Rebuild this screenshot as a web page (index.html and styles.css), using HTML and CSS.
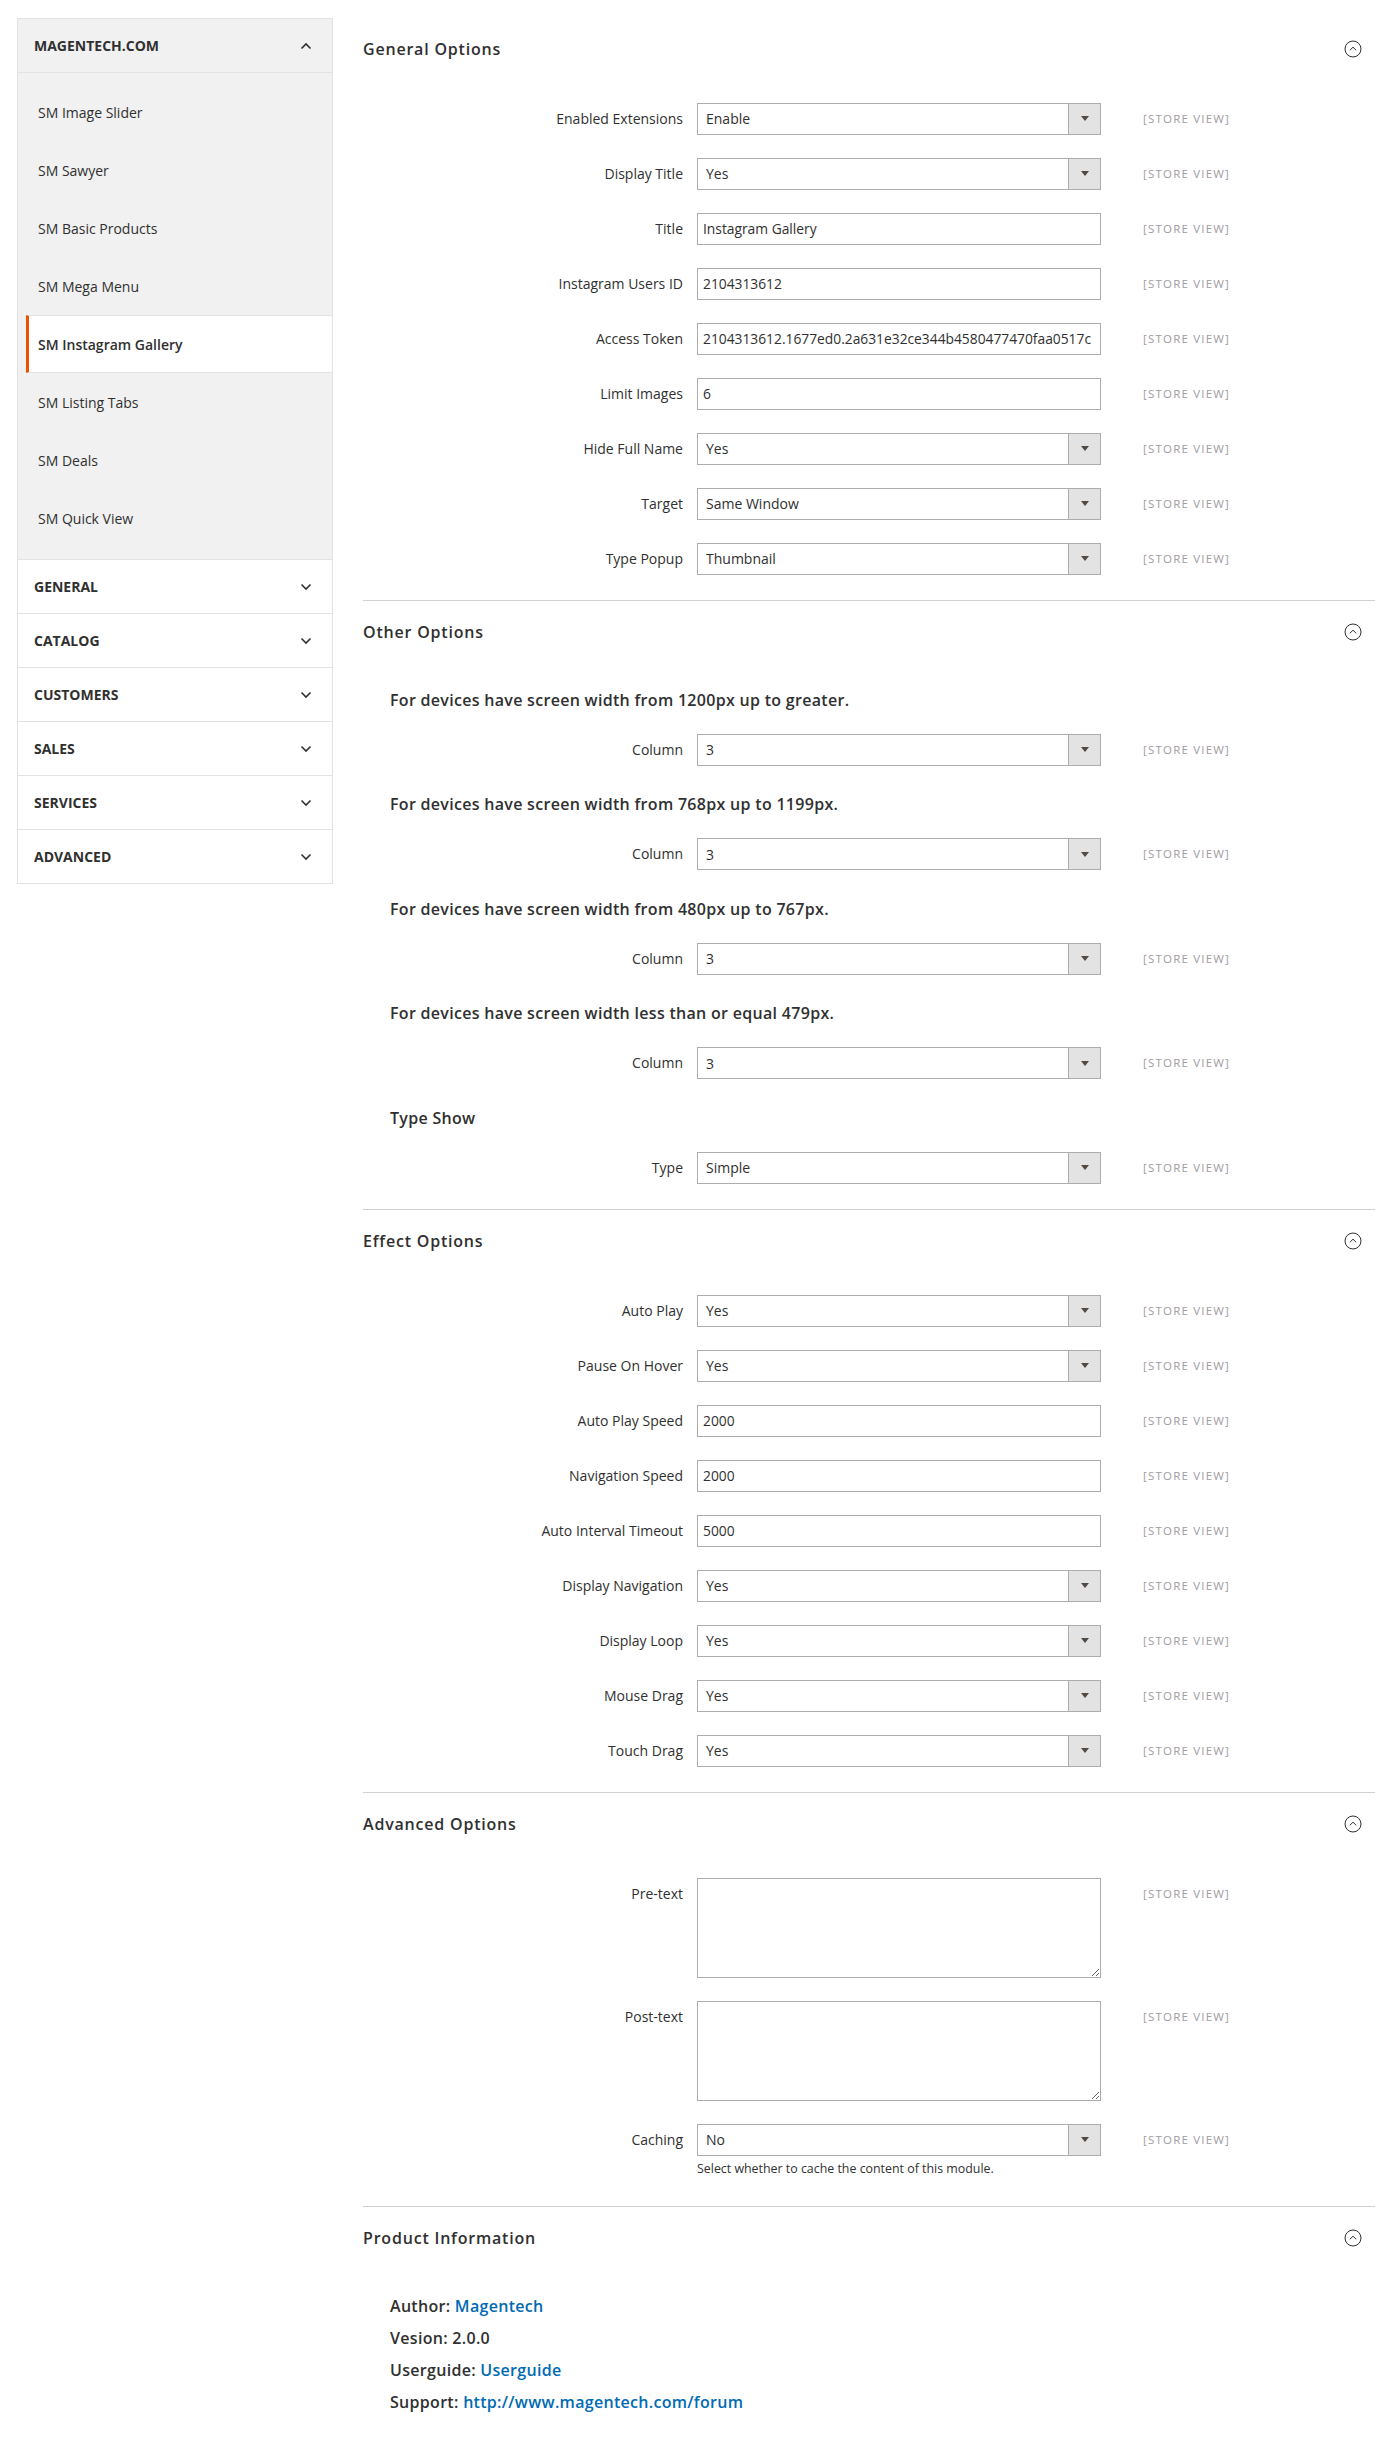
FILE: index.html
```
<html>
<head>
  <meta charset="UTF-8">
  <meta name="viewport" content="width=device-width, initial-scale=1.0">
  <title>Configuration - SM Instagram Gallery</title>
  <link rel="stylesheet" href="styles.css">
</head>
<body>
  <div class="page">
    <aside class="sidebar">
      <div class="tab-group open">
        <div class="tab-title">
          MAGENTECH.COM
          <svg class="chev" width="12" height="8" viewBox="0 0 12 8"><path d="M1.5 6.5 L6 2 L10.5 6.5"/></svg>
        </div>
        <ul class="tab-items">
          <li>SM Image Slider</li>
          <li>SM Sawyer</li>
          <li>SM Basic Products</li>
          <li>SM Mega Menu</li>
          <li class="active">SM Instagram Gallery</li>
          <li>SM Listing Tabs</li>
          <li>SM Deals</li>
          <li>SM Quick View</li>
        </ul>
      </div>
      <div class="tab-group">
        <div class="tab-title">GENERAL <svg class="chev" width="12" height="8" viewBox="0 0 12 8"><path d="M1.5 1.5 L6 6 L10.5 1.5"/></svg></div>
      </div>
      <div class="tab-group">
        <div class="tab-title">CATALOG <svg class="chev" width="12" height="8" viewBox="0 0 12 8"><path d="M1.5 1.5 L6 6 L10.5 1.5"/></svg></div>
      </div>
      <div class="tab-group">
        <div class="tab-title">CUSTOMERS <svg class="chev" width="12" height="8" viewBox="0 0 12 8"><path d="M1.5 1.5 L6 6 L10.5 1.5"/></svg></div>
      </div>
      <div class="tab-group">
        <div class="tab-title">SALES <svg class="chev" width="12" height="8" viewBox="0 0 12 8"><path d="M1.5 1.5 L6 6 L10.5 1.5"/></svg></div>
      </div>
      <div class="tab-group">
        <div class="tab-title">SERVICES <svg class="chev" width="12" height="8" viewBox="0 0 12 8"><path d="M1.5 1.5 L6 6 L10.5 1.5"/></svg></div>
      </div>
      <div class="tab-group">
        <div class="tab-title">ADVANCED <svg class="chev" width="12" height="8" viewBox="0 0 12 8"><path d="M1.5 1.5 L6 6 L10.5 1.5"/></svg></div>
      </div>
    </aside>

    <main class="main">
      <!-- General Options -->
      <section class="section">
        <div class="section-title">
          General Options
          <svg class="toggle" width="18" height="18" viewBox="0 0 18 18"><circle cx="9" cy="9" r="8"/><path d="M5.8 10.3 L9 7.2 L12.2 10.3"/></svg>
        </div>
        <div class="field">
          <label>Enabled Extensions</label>
          <div class="select"><select><option>Enable</option></select><span class="arrow"></span></div>
          <span class="scope">[STORE VIEW]</span>
        </div>
        <div class="field">
          <label>Display Title</label>
          <div class="select"><select><option>Yes</option></select><span class="arrow"></span></div>
          <span class="scope">[STORE VIEW]</span>
        </div>
        <div class="field">
          <label>Title</label>
          <input class="text" type="text" value="Instagram Gallery">
          <span class="scope">[STORE VIEW]</span>
        </div>
        <div class="field">
          <label>Instagram Users ID</label>
          <input class="text" type="text" value="2104313612">
          <span class="scope">[STORE VIEW]</span>
        </div>
        <div class="field">
          <label>Access Token</label>
          <input class="text" type="text" value="2104313612.1677ed0.2a631e32ce344b4580477470faa0517c">
          <span class="scope">[STORE VIEW]</span>
        </div>
        <div class="field">
          <label>Limit Images</label>
          <input class="text" type="text" value="6">
          <span class="scope">[STORE VIEW]</span>
        </div>
        <div class="field">
          <label>Hide Full Name</label>
          <div class="select"><select><option>Yes</option></select><span class="arrow"></span></div>
          <span class="scope">[STORE VIEW]</span>
        </div>
        <div class="field">
          <label>Target</label>
          <div class="select"><select><option>Same Window</option></select><span class="arrow"></span></div>
          <span class="scope">[STORE VIEW]</span>
        </div>
        <div class="field">
          <label>Type Popup</label>
          <div class="select"><select><option>Thumbnail</option></select><span class="arrow"></span></div>
          <span class="scope">[STORE VIEW]</span>
        </div>
      </section>

      <!-- Other Options -->
      <section class="section">
        <div class="section-title">
          Other Options
          <svg class="toggle" width="18" height="18" viewBox="0 0 18 18"><circle cx="9" cy="9" r="8"/><path d="M5.8 10.3 L9 7.2 L12.2 10.3"/></svg>
        </div>
        <h4 class="group-heading">For devices have screen width from 1200px up to greater.</h4>
        <div class="field">
          <label>Column</label>
          <div class="select"><select><option>3</option></select><span class="arrow"></span></div>
          <span class="scope">[STORE VIEW]</span>
        </div>
        <h4 class="group-heading">For devices have screen width from 768px up to 1199px.</h4>
        <div class="field">
          <label>Column</label>
          <div class="select"><select><option>3</option></select><span class="arrow"></span></div>
          <span class="scope">[STORE VIEW]</span>
        </div>
        <h4 class="group-heading">For devices have screen width from 480px up to 767px.</h4>
        <div class="field">
          <label>Column</label>
          <div class="select"><select><option>3</option></select><span class="arrow"></span></div>
          <span class="scope">[STORE VIEW]</span>
        </div>
        <h4 class="group-heading">For devices have screen width less than or equal 479px.</h4>
        <div class="field">
          <label>Column</label>
          <div class="select"><select><option>3</option></select><span class="arrow"></span></div>
          <span class="scope">[STORE VIEW]</span>
        </div>
        <h4 class="group-heading">Type Show</h4>
        <div class="field">
          <label>Type</label>
          <div class="select"><select><option>Simple</option></select><span class="arrow"></span></div>
          <span class="scope">[STORE VIEW]</span>
        </div>
      </section>

      <!-- Effect Options -->
      <section class="section">
        <div class="section-title">
          Effect Options
          <svg class="toggle" width="18" height="18" viewBox="0 0 18 18"><circle cx="9" cy="9" r="8"/><path d="M5.8 10.3 L9 7.2 L12.2 10.3"/></svg>
        </div>
        <div class="field">
          <label>Auto Play</label>
          <div class="select"><select><option>Yes</option></select><span class="arrow"></span></div>
          <span class="scope">[STORE VIEW]</span>
        </div>
        <div class="field">
          <label>Pause On Hover</label>
          <div class="select"><select><option>Yes</option></select><span class="arrow"></span></div>
          <span class="scope">[STORE VIEW]</span>
        </div>
        <div class="field">
          <label>Auto Play Speed</label>
          <input class="text" type="text" value="2000">
          <span class="scope">[STORE VIEW]</span>
        </div>
        <div class="field">
          <label>Navigation Speed</label>
          <input class="text" type="text" value="2000">
          <span class="scope">[STORE VIEW]</span>
        </div>
        <div class="field">
          <label>Auto Interval Timeout</label>
          <input class="text" type="text" value="5000">
          <span class="scope">[STORE VIEW]</span>
        </div>
        <div class="field">
          <label>Display Navigation</label>
          <div class="select"><select><option>Yes</option></select><span class="arrow"></span></div>
          <span class="scope">[STORE VIEW]</span>
        </div>
        <div class="field">
          <label>Display Loop</label>
          <div class="select"><select><option>Yes</option></select><span class="arrow"></span></div>
          <span class="scope">[STORE VIEW]</span>
        </div>
        <div class="field">
          <label>Mouse Drag</label>
          <div class="select"><select><option>Yes</option></select><span class="arrow"></span></div>
          <span class="scope">[STORE VIEW]</span>
        </div>
        <div class="field">
          <label>Touch Drag</label>
          <div class="select"><select><option>Yes</option></select><span class="arrow"></span></div>
          <span class="scope">[STORE VIEW]</span>
        </div>
      </section>

      <!-- Advanced Options -->
      <section class="section">
        <div class="section-title">
          Advanced Options
          <svg class="toggle" width="18" height="18" viewBox="0 0 18 18"><circle cx="9" cy="9" r="8"/><path d="M5.8 10.3 L9 7.2 L12.2 10.3"/></svg>
        </div>
        <div class="field">
          <label>Pre-text</label>
          <textarea></textarea>
          <span class="scope">[STORE VIEW]</span>
        </div>
        <div class="field">
          <label>Post-text</label>
          <textarea></textarea>
          <span class="scope">[STORE VIEW]</span>
        </div>
        <div class="field">
          <label>Caching</label>
          <div class="control">
            <div class="select"><select><option>No</option></select><span class="arrow"></span></div>
            <p class="note">Select whether to cache the content of this module.</p>
          </div>
          <span class="scope">[STORE VIEW]</span>
        </div>
      </section>

      <!-- Product Information -->
      <section class="section last">
        <div class="section-title">
          Product Information
          <svg class="toggle" width="18" height="18" viewBox="0 0 18 18"><circle cx="9" cy="9" r="8"/><path d="M5.8 10.3 L9 7.2 L12.2 10.3"/></svg>
        </div>
        <ul class="info">
          <li>Author: <a href="#">Magentech</a></li>
          <li>Vesion: 2.0.0</li>
          <li>Userguide: <a href="#">Userguide</a></li>
          <li>Support: <a href="#">http://www.magentech.com/forum</a></li>
        </ul>
      </section>
    </main>
  </div>
</body>
</html>
```
FILE: styles.css
```
:root {
  --text: #303030;
  --border: #e3e3e3;
  --input-border: #adadad;
  --panel: #f1f1f1;
  --accent: #eb5202;
  --link: #006bb4;
  --scope: #a09ba0;
}

* {
  margin: 0;
  padding: 0;
  box-sizing: border-box;
  font-family: 'Open Sans', 'Liberation Sans', sans-serif;
}

body {
  background: #fff;
  color: var(--text);
  font-size: 14px;
}

.page {
  display: flex;
  align-items: flex-start;
  gap: 30px;
  padding: 18px 17px 0;
}

/* sidebar */
.sidebar {
  width: 316px;
  flex-shrink: 0;
  border: 1px solid var(--border);
  border-bottom: none;
}

.tab-group {
  border-bottom: 1px solid var(--border);
}

.tab-title {
  height: 53px;
  display: flex;
  align-items: center;
  justify-content: space-between;
  padding: 0 20px 0 16px;
  font-size: 14px;
  font-weight: 700;
}

.tab-group.open {
  background: var(--panel);
}

.tab-group.open .tab-title {
  border-bottom: 1px solid var(--border);
  height: 54px;
}

.chev {
  fill: none;
  stroke: var(--text);
  stroke-width: 1.6;
}

.tab-items {
  list-style: none;
  padding: 10px 0 12px 8px;
}

.tab-items li {
  height: 58px;
  display: flex;
  align-items: center;
  padding-left: 9px;
  border-left: 3px solid transparent;
  font-size: 14px;
}

.tab-items li.active {
  background: #fff;
  border-left-color: var(--accent);
  border-top: 1px solid var(--border);
  border-bottom: 1px solid var(--border);
  font-weight: 600;
}

/* main */
.main {
  flex: 1;
  padding-top: 21px;
}

.section {
  border-bottom: 1px solid #d1d1d1;
  padding-bottom: 25.5px;
  margin-bottom: 21px;
}

.section.last {
  border-bottom: none;
}

.section-title {
  display: flex;
  align-items: center;
  justify-content: space-between;
  height: 20px;
  padding-right: 13px;
  margin-bottom: 43.5px;
  font-size: 16px;
  font-weight: 600;
  letter-spacing: 0.8px;
}

.toggle {
  fill: none;
  stroke: #303030;
  stroke-width: 1;
}

.field {
  display: grid;
  grid-template-columns: 320px 404px 1fr;
  column-gap: 14px;
  align-items: start;
  margin-bottom: 23px;
}

.field:last-child {
  margin-bottom: 0;
}

.field label {
  text-align: right;
  line-height: 32px;
  font-size: 14px;
  font-weight: 500;
}

.scope {
  line-height: 32px;
  padding-left: 28px;
  font-size: 11.5px;
  letter-spacing: 1.2px;
  color: var(--scope);
}

.text,
.select,
textarea {
  width: 404px;
  border: 1px solid var(--input-border);
  background: #fff;
  color: var(--text);
  font-size: 14px;
}

.text {
  height: 32px;
  padding: 0 5px;
  font-size: 13.8px;
}

.select {
  height: 32px;
  display: flex;
}

.select select {
  flex: 1;
  border: none;
  background: transparent;
  appearance: none;
  -webkit-appearance: none;
  padding-left: 8px;
  font-size: 14px;
  color: var(--text);
}

.select .arrow {
  width: 32px;
  border-left: 1px solid var(--input-border);
  background: var(--border);
  display: flex;
  align-items: center;
  justify-content: center;
}

.select .arrow::before {
  content: '';
  border-left: 4.5px solid transparent;
  border-right: 4.5px solid transparent;
  border-top: 5px solid #514943;
}

textarea {
  height: 100px;
  padding: 5px;
  resize: vertical;
}

.note {
  margin-top: 5px;
  font-size: 12.4px;
  line-height: 16px;
  margin-bottom: 4px;
}

.group-heading {
  padding-left: 27px;
  line-height: 20px;
  font-size: 16px;
  font-weight: 600;
  letter-spacing: 0.3px;
  margin: 28.5px 0 24px;
}

.section-title + .group-heading {
  margin-top: 47.5px;
}

.section-title:has(+ .group-heading) {
  margin-bottom: 0;
}

.info {
  list-style: none;
  padding: 48px 0 0 27px;
}

.section-title + .info {
  margin-top: -43.5px;
}

.info li {
  line-height: 20px;
  margin-bottom: 12px;
  font-size: 16px;
  font-weight: 600;
  letter-spacing: 0.3px;
}

.info a {
  color: var(--link);
  text-decoration: none;
}
```
